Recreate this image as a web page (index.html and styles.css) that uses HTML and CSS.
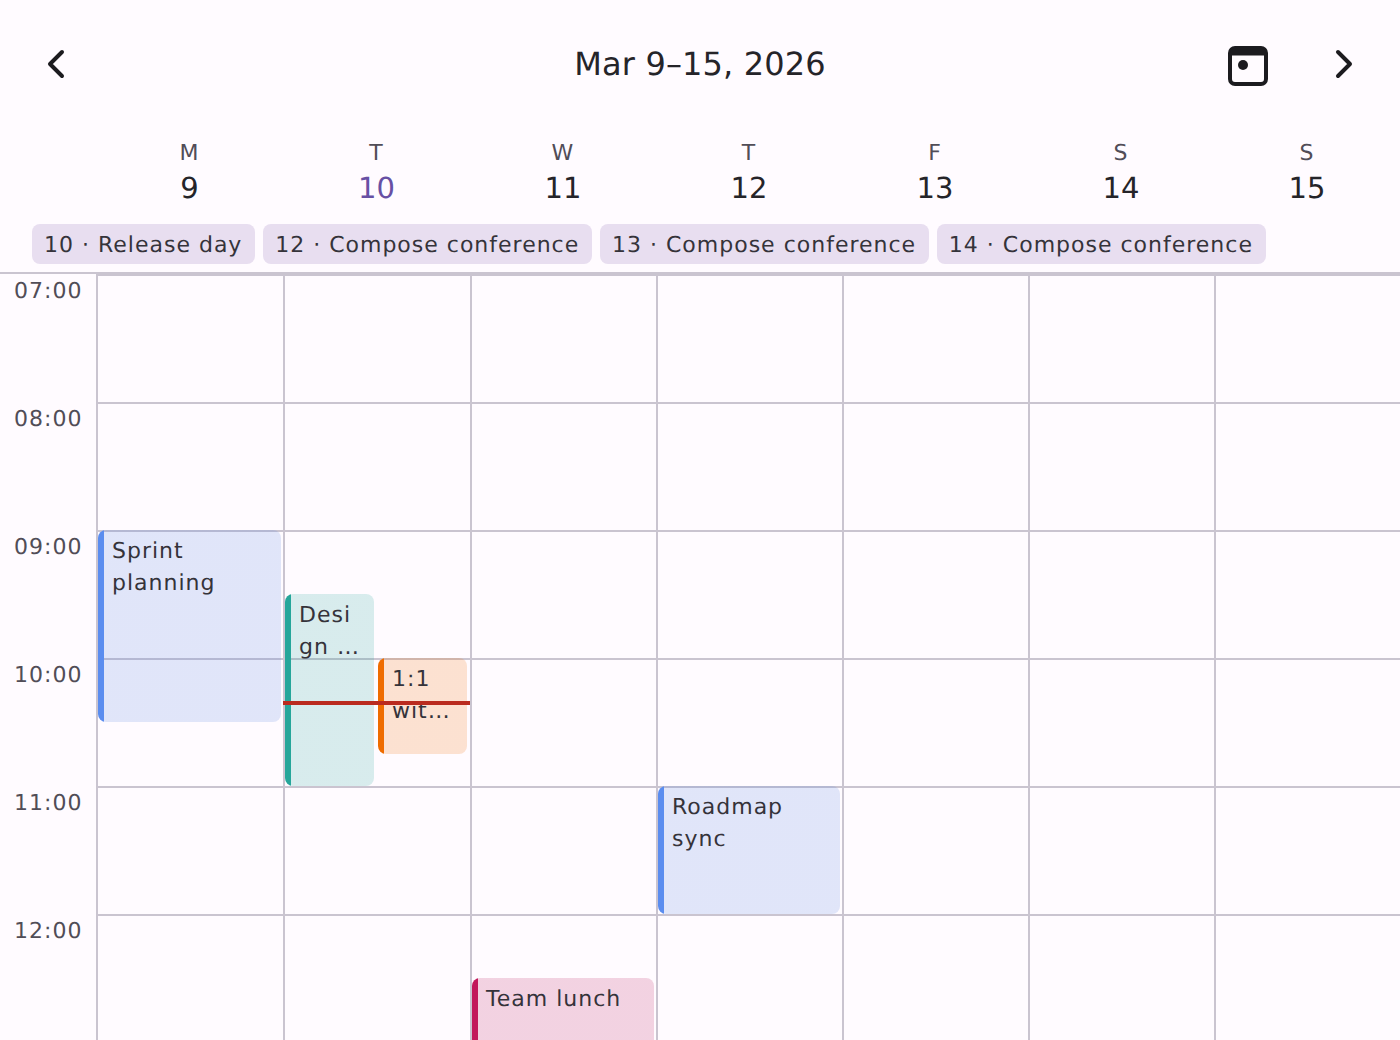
FILE: index.html
```html
<!DOCTYPE html>
<html lang="en">
<head>
<meta charset="utf-8">
<title>Week calendar</title>
<link rel="stylesheet" href="styles.css">
</head>
<body>
<header class="topbar">
  <button class="icon-btn" aria-label="Previous week">
    <svg width="34" height="34" viewBox="0 0 34 34"><path d="M22 5 L10 17 L22 29" class="stroke"/></svg>
  </button>
  <h1 class="title">Mar 9–15, 2026</h1>
  <div class="top-actions">
    <button class="icon-btn cal-btn" aria-label="Today">
      <svg width="40" height="40" viewBox="0 0 40 40"><rect x="2" y="2" width="36" height="36" rx="5" class="box"/><path d="M2 9.5 V7 a5 5 0 0 1 5-5 H33 a5 5 0 0 1 5 5 V9.5 Z" class="fill"/><circle cx="15" cy="19" r="5" class="fill"/></svg>
    </button>
    <button class="icon-btn" aria-label="Next week">
      <svg width="34" height="34" viewBox="0 0 34 34"><path d="M12 5 L24 17 L12 29" class="stroke"/></svg>
    </button>
  </div>
</header>
<div class="days">
  <div class="day"><span class="dow">M</span><span class="num">9</span></div>
  <div class="day"><span class="dow">T</span><span class="num today">10</span></div>
  <div class="day"><span class="dow">W</span><span class="num">11</span></div>
  <div class="day"><span class="dow">T</span><span class="num">12</span></div>
  <div class="day"><span class="dow">F</span><span class="num">13</span></div>
  <div class="day"><span class="dow">S</span><span class="num">14</span></div>
  <div class="day"><span class="dow">S</span><span class="num">15</span></div>
</div>
<div class="chips">
  <span class="chip">10 · Release day</span>
  <span class="chip">12 · Compose conference</span>
  <span class="chip">13 · Compose conference</span>
  <span class="chip">14 · Compose conference</span>
</div>
<main class="grid">
  <div class="times">
    <div class="time">07:00</div>
    <div class="time">08:00</div>
    <div class="time">09:00</div>
    <div class="time">10:00</div>
    <div class="time">11:00</div>
    <div class="time">12:00</div>
  </div>
  <div class="col">
    <div class="event blue e-sprint">Sprint planning</div>
  </div>
  <div class="col">
    <div class="event teal e-design"><span class="line">Desi</span><span class="line">gn …</span></div>
    <div class="event orange e-one"><span class="line">1:1</span><span class="line">wit…</span></div>
    <div class="now"></div>
  </div>
  <div class="col">
    <div class="event pink e-lunch">Team lunch</div>
  </div>
  <div class="col">
    <div class="event blue e-road">Roadmap sync</div>
  </div>
  <div class="col"></div>
  <div class="col"></div>
  <div class="col"></div>
</main>
</body>
</html>
```
FILE: styles.css
```css
* { box-sizing: border-box; }
html, body { margin: 0; height: 1040px; overflow: hidden; }
body {
  background: #fffbff;
  color: #1c1b1f;
  font-family: "DejaVu Sans", sans-serif;
  text-rendering: geometricPrecision;
}
.topbar {
  height: 128px;
  display: flex;
  align-items: center;
  justify-content: space-between;
  padding: 0 40px;
  position: relative;
}
.icon-btn {
  border: 0;
  background: none;
  padding: 0;
  display: flex;
  align-items: center;
  justify-content: center;
  color: #1c1b1f;
}
.cal-btn { margin-top: 4px; }
.stroke { fill: none; stroke: #1c1b1f; stroke-width: 4; stroke-linecap: round; stroke-linejoin: round; }
.box { fill: none; stroke: #1c1b1f; stroke-width: 4; }
.fill { fill: #1c1b1f; }
.title {
  position: absolute;
  left: 0;
  right: 0;
  margin: 0;
  text-align: center;
  font-size: 32px;
  font-weight: 400;
  letter-spacing: 0.15px;
  color: #252429;
}
.top-actions { display: flex; align-items: center; gap: 58px; position: relative; }
.days {
  display: grid;
  grid-template-columns: 187px 187px repeat(5, 186px);
  padding-left: 96px;
  height: 88px;
  padding-top: 14px;
}
.day { display: flex; flex-direction: column; align-items: center; }
.dow { font-size: 22px; line-height: 24px; color: #514d57; letter-spacing: 1px; }
.num { font-size: 29px; line-height: 45px; color: #252429; }
.num.today { color: #6750a4; }
.chips {
  display: flex;
  gap: 8px;
  padding: 8px 32px 8px;
  height: 56px;
}
.chip {
  height: 40px;
  padding: 0 12.75px 0 12px;
  border-radius: 8px;
  background: #e8def0;
  font-size: 22px;
  line-height: 44px;
  letter-spacing: 1px;
  white-space: nowrap;
  color: #35333a;
}
.grid {
  display: grid;
  grid-template-columns: 96px 187px 187px repeat(5, 186px);
  border-top: 2px solid #cac4d0;
  height: 768px;
  overflow: hidden;
}
.times { height: 766px; overflow: hidden; }
.time {
  height: 128px;
  padding: 3px 0 0 14px;
  font-size: 22px;
  line-height: 30px;
  letter-spacing: 1px;
  color: #514d57;
}
.col {
  position: relative;
  height: 766px;
  overflow: hidden;
  border-left: 2px solid #cac4d0;
  background-image: repeating-linear-gradient(to bottom, #cac4d0 0, #cac4d0 2px, transparent 2px, transparent 128px);
}
.col:nth-child(3) { overflow: visible; }
.event {
  position: absolute;
  border-radius: 8px;
  padding: 6px 8px 4px 14px;
  font-size: 22px;
  line-height: 32px;
  letter-spacing: 1px;
  color: #35333a;
  overflow: hidden;
}
.line { display: block; white-space: nowrap; }
.blue { background: linear-gradient(to right, #5b8def 6px, rgba(85,130,222,.18) 6px); }
.teal { background: linear-gradient(to right, #26a69a 6px, rgba(38,166,154,.18) 6px); }
.orange { background: linear-gradient(to right, #ef6c00 6px, rgba(239,108,0,.18) 6px); }
.pink { background: linear-gradient(to right, #c2185b 6px, rgba(185,24,91,.18) 6px); }
.e-sprint { top: 256px; left: 0; right: 2px; height: 192px; }
.e-road { top: 512px; left: 0; right: 2px; height: 128px; }
.e-design { top: 320px; left: 0; width: 89px; height: 192px; }
.e-one { top: 384px; left: 93px; width: 89px; height: 96px; }
.e-lunch { top: 704px; left: 0; right: 2px; height: 128px; }
.now { position: absolute; top: 427px; left: -2px; right: 0; height: 4px; background: #ba2b1f; }
```
